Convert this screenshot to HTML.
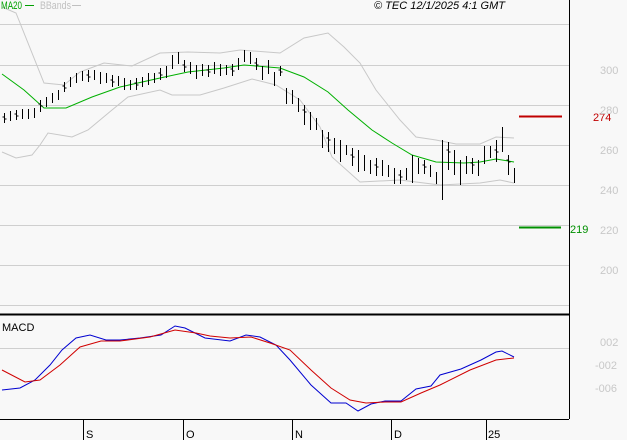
<!DOCTYPE html><html><head><style>body{margin:0;background:#f8f8f8}svg{display:block}text{font-family:"Liberation Sans",sans-serif;font-size:11px}</style></head><body>
<svg width="627" height="440" xmlns="http://www.w3.org/2000/svg">
<rect width="627" height="440" fill="#f8f8f8"/>
<g stroke="#cfcfcf" stroke-width="1">
<path d="M0 24.5H569M0 65.5H569M0 105.5H569M0 145.5H569M0 185.5H569M0 225.5H569M0 265.5H569M0 305.5H569M0 348.5H569"/>
</g>
<line x1="569.5" y1="0" x2="569.5" y2="419" stroke="#000"/>
<line x1="0" y1="314.5" x2="569" y2="314.5" stroke="#000" stroke-width="2"/>
<line x1="0" y1="419.5" x2="569" y2="419.5" stroke="#000"/>
<path d="M83.5 419V440M183.5 419V440M292.5 419V440M391.5 419V440M486.5 419V440" stroke="#000"/>
<g fill="#000" font-size="12"><text x="86" y="438">S</text><text x="186" y="438">O</text><text x="295" y="438">N</text><text x="394" y="438">D</text><text x="488" y="438">25</text></g>
<polyline fill="none" stroke="#c8c8c8" points="2,7 16,13 44,83 64,85 80,72 104,63 132,66 160,53 188,52 220,53 240,50 280,53 304,38 328,33 344,47 360,63 376,90 400,120 416,137 436,140 456,144 480,144 496,137 514,138"/>
<polyline fill="none" stroke="#c8c8c8" points="2,152 16,158 32,155 40,145 48,133 72,137 88,130 112,110 128,97 160,90 172,95 200,95 224,88 252,79 276,85 300,100 320,127 332,157 360,182 400,180 440,185 480,183 500,180 514,183"/>
<polyline fill="none" stroke="#00b000" points="2,74 24,90 44,108 66,108 92,97 120,87 160,78 188,72 224,68 244,65 256,66 280,68 304,77 328,92 348,110 372,130 392,143 412,155 436,162 464,163 480,162 496,159 514,162"/>
<g stroke="#000" fill="none" transform="translate(0.5,0)">
<path d="M4 113v10M10 111v10M16 110v10M22 109v10M28 109v10M34 108v10M40 100v12M46 97v10M52 93v10M58 90v10M64 82v10M70 77v10M76 73v10M82 71v10M88 70v12M94 70v10M100 72v12M106 73v10M112 75v12M118 76v10M124 78v12M130 80v10M136 78v12M142 77v10M148 73v12M154 73v10M160 68v12M166 66v12M172 55v14M178 52v12M184 60v12M190 62v12M196 65v14M202 64v12M208 65v12M214 62v12M220 64v12M226 65v10M232 64v12M238 58v12M244 50v12M250 52v12M256 58v12M262 66v14M268 60v14M274 72v14M280 66v10M286 88v16M292 90v14M298 98v14M304 105v20M310 112v18M316 118v12M322 130v18M328 132v20M334 138v16M340 140v22M346 145v10M352 148v18M358 150v22M364 155v16M370 160v14M376 158v18M382 160v16M388 165v12M394 168v16M400 170v14M406 168v12M412 155v28M418 158v16M424 160v14M430 165v12M436 172v12M442 140v60M448 142v28M454 150v25M460 160v25M466 156v18M472 158v16M478 160v16M484 146v18M490 146v12M496 140v22M502 127v25M508 155v20M514 168v15"/>
<path d="M2 117h2M4 119h2M14 114h2M16 116h2M38 104h2M40 106h2M62 86h2M64 88h2M86 75h2M88 77h2M110 80h2M112 82h2M134 83h2M136 85h2M158 73h2M160 75h2M182 65h2M184 67h2M206 70h2M208 72h2M230 69h2M232 71h2M254 63h2M256 65h2M278 70h2M280 72h2M302 110h2M304 112h2M326 138h2M328 140h2M350 155h2M352 157h2M374 165h2M376 167h2M398 175h2M400 177h2M422 165h2M424 167h2M446 150h2M448 152h2M470 163h2M472 165h2M494 150h2M496 152h2M506 160h2M508 162h2"/>
</g>
<line x1="519" y1="116.5" x2="562" y2="116.5" stroke="#c00000" stroke-width="2"/>
<text x="593" y="121" fill="#c00000">274</text>
<line x1="519" y1="227.5" x2="561" y2="227.5" stroke="#009000" stroke-width="2"/>
<text x="570" y="233" fill="#009000">219</text>
<g fill="#c8c8c8" font-size="12"><text x="600" y="74">300</text><text x="600" y="114">280</text><text x="600" y="154">260</text><text x="600" y="194">240</text><text x="600" y="234">220</text><text x="600" y="274">200</text>
<text x="600" y="346">002</text><text x="595" y="369">-002</text><text x="595" y="392">-006</text></g>
<text x="1" y="9" fill="#00a000" font-size="10" textLength="21" lengthAdjust="spacingAndGlyphs">MA20</text><line x1="25" y1="5.5" x2="34" y2="5.5" stroke="#00a000"/>
<text x="40" y="9" fill="#c0c0c0" font-size="10" textLength="31" lengthAdjust="spacingAndGlyphs">BBands</text><line x1="72" y1="5.5" x2="81" y2="5.5" stroke="#c0c0c0"/>
<text x="374" y="9" font-style="italic" fill="#000">© TEC 12/1/2025 4:1 GMT</text>
<text x="2" y="331" fill="#000">MACD</text>
<polyline fill="none" stroke="#0000d0" points="2,390 20,388 35,380 50,365 62,350 76,338 90,335 106,340 120,340 140,338 161,335 175,326 185,328 205,338 230,341 246,335 260,337 276,345 290,360 311,385 331,403 346,403 358,411 371,404 385,401 401,401 416,389 431,386 440,375 461,369 481,360 496,352 502,351 514,357"/>
<polyline fill="none" stroke="#d00000" points="2,370 25,382 40,380 60,365 80,347 101,341 120,341 150,337 175,330 196,333 210,336 230,338 251,337 270,343 290,350 311,370 331,388 350,400 366,403 385,402 401,402 421,393 440,385 470,370 496,360 514,358"/>
</svg></body></html>
